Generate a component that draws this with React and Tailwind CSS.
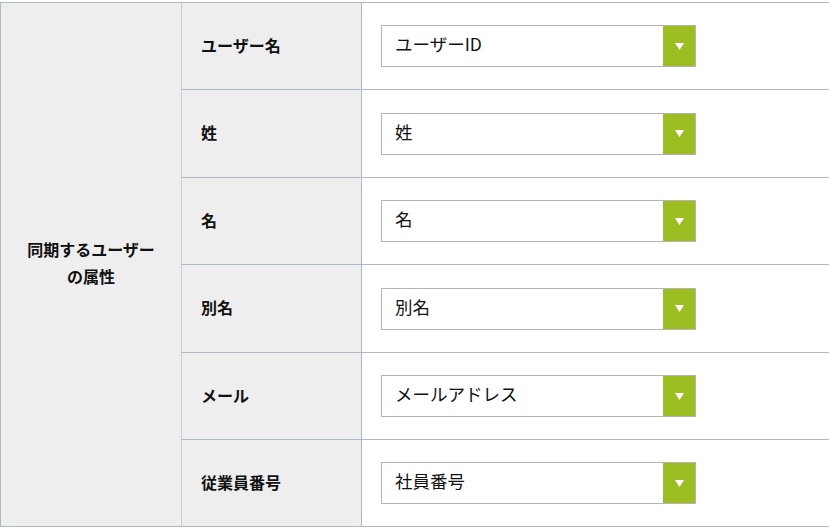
import React from 'react';

const rows = [
  { label: 'ユーザー名', value: 'ユーザーID', h: 'h-[86px]' },
  { label: '姓', value: '姓', h: 'h-[88px]' },
  { label: '名', value: '名', h: 'h-[87px]' },
  { label: '別名', value: '別名', h: 'h-[88px]' },
  { label: 'メール', value: 'メールアドレス', h: 'h-[87px]' },
  { label: '従業員番号', value: '社員番号', h: 'h-[87px]' },
];

const font = { fontFamily: '"Noto Sans CJK JP", "Noto Sans", sans-serif' };

const SelectBox = ({ value }) => (
  <div className="flex h-[42px] w-[315px] border border-[#b4b4b4] bg-white">
    <div className="flex flex-1 items-center pb-[3px] pl-[13px] text-[17.5px] text-[#111]">{value}</div>
    <div className="flex w-[32px] items-center justify-center bg-[#9cbe22]">
      <svg width="11" height="9" viewBox="0 0 11 9">
        <polygon points="1,1 10,1 5.5,8" fill="#fff" />
      </svg>
    </div>
  </div>
);

export default function App() {
  return (
    <div className="w-[829px] h-[531px] overflow-hidden bg-white pt-[2px]" style={font}>
      <div className="flex w-[900px] border-t border-b border-l border-[#b0bac4]">
        {/* group heading */}
        <div className="flex w-[181px] shrink-0 items-center justify-center border-r border-[#c4ccd4] bg-[#eeeeee] pb-[4px] text-center text-[16px] font-bold leading-[27px] text-[#111]">
          同期するユーザー
          <br />
          の属性
        </div>

        <div className="flex flex-1 flex-col">
          {rows.map((row, i) => (
            <div
              key={row.label}
              className={`flex ${row.h} ${i > 0 ? 'border-t border-[#b0bac4]' : ''}`}
            >
              <div className="flex w-[180px] shrink-0 items-center border-r border-[#b0bac4] bg-[#eeeeee] pb-[3px] pl-[19px] text-[16px] font-bold text-[#111]">
                {row.label}
              </div>
              <div className="flex flex-1 items-center pl-[19px]">
                <SelectBox value={row.value} />
              </div>
            </div>
          ))}
        </div>
      </div>
    </div>
  );
}
